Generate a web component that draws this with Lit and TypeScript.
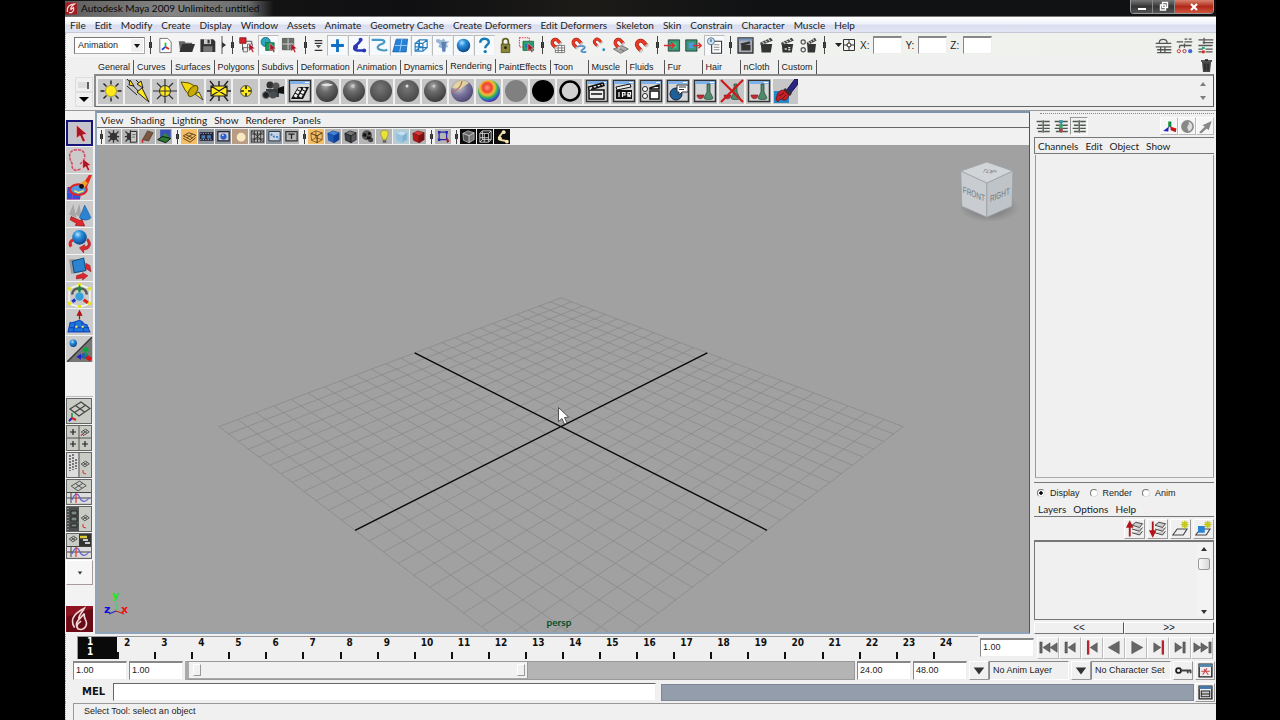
import { LitElement, html, svg, css, nothing } from "lit";
import { customElement, state } from "lit/decorators.js";
import { classMap } from "lit/directives/class-map.js";

type Art = unknown;

const MENUS = ["File", "Edit", "Modify", "Create", "Display", "Window", "Assets", "Animate", "Geometry Cache", "Create Deformers", "Edit Deformers", "Skeleton", "Skin", "Constrain", "Character", "Muscle", "Help"];
const TABS = ["General", "Curves", "Surfaces", "Polygons", "Subdivs", "Deformation", "Animation", "Dynamics", "Rendering", "PaintEffects", "Toon", "Muscle", "Fluids", "Fur", "Hair", "nCloth", "Custom"];

/* ---------- shared drawing parts (24 x 24 box) ---------- */
const cursor = svg`<path d="M14 9l0 11 3-2.500 2 4.500 2-1-2-4.300 3.500-.4z" fill="#b01222" stroke="#fff" stroke-width=".5"/>`;
const sunRays = svg`<path d="M12 1.500v4M12 18.500v4M1.500 12h4M18.500 12h4M4.500 4.500l3 3M16.500 16.500l3 3M19.500 4.500l-3 3M7.500 16.500l-3 3" stroke="#222" stroke-width="1.400"/>`;
const clap = svg`<path d="M4 11h15v9H4z" fill="#eee" stroke="#111" stroke-width="1.500"/><path d="M4 11l-.5-3L18 4l1 2.500L6 10.500" fill="#eee" stroke="#111" stroke-width="1.500"/><path d="M7 7l2 3M11 6l2 3M15 5l2 3M6 15h11" stroke="#111" stroke-width="1.500"/>`;
const darkClap = svg`<path d="M4 10h16l-2 12H5z" fill="#333"/><path d="M3 8L18 1l3 4L4 12z" fill="#444"/><path d="M6 7l3 2.500M10 5l3 2.500M14 3l3 2.500" stroke="#ddd" stroke-width="1.500"/>`;
const win = (inner: Art) => svg`<path d="M1.500 1.500h21v21h-21z" fill="#d4d6d8" stroke="#333" stroke-width="1.500"/><path d="M2 2h20v3H2z" fill="#7fb0e8"/><path d="M17 3.500h4" stroke="#fff"/>${inner}`;
const magnet = svg`<g transform="rotate(-42 9 8)"><path d="M4.500 14V8a4.500 4.500 0 0 1 9 0v6" fill="none" stroke="#931c10" stroke-width="4.600"/><path d="M4.500 13V8a4.500 4.500 0 0 1 9 0v5" fill="none" stroke="#ea3a24" stroke-width="3.400"/><path d="M4.500 12.500v3M13.500 12.500v3" stroke="#c9c9c9" stroke-width="4"/></g>`;
const ball = (fill: string) => svg`<circle cx="12" cy="12" r="11" fill="url(#${fill})"/>`;
const flask = svg`<path d="M14 5h3v8l3 6c0 2-9 2-9 0l3-6z" fill="#4f8a6a" stroke="#243" stroke-width=".7"/><path d="M4 16h7c0 5-7 5-7 0z" fill="#c22b33" stroke="#622" stroke-width=".6"/>`;
const grid3 = svg`<path d="M3 10L14 3l9 6.500L12 17zM8.500 6.500l9 6.500M7.500 13.500l11-7.300" fill="none" stroke="#444" stroke-width="1.200"/>`;
const axis = svg`<path d="M5 19V14" stroke="#0a9a3a" stroke-width="1.500"/><path d="M5 19l-3 3" stroke="#22c" stroke-width="2"/><path d="M5 19l4 2" stroke="#d22" stroke-width="2"/>`;
const transport = (inner: Art) => svg`<g fill="#666" stroke="#333" stroke-width=".5">${inner}</g>`;
const cube = (top: string, left: string, right: string, line: string) => svg`<path d="M3 7l8-4 10 3-8 5z" fill="${top}" stroke="${line}"/><path d="M3 7l10 4v11L4 18z" fill="${left}" stroke="${line}"/><path d="M13 11l8-5v11l-8 5z" fill="${right}" stroke="${line}"/>`;

const STATUS: Record<string, Art> = {
  fresh: svg`<path d="M4 2h11l5 5v15H4z" fill="#fff" stroke="#444"/><path d="M12 14l-5 4" stroke="#24d" stroke-width="2.500"/><path d="M12 14l5 3" stroke="#d22" stroke-width="2.500"/><path d="M12 8v6" stroke="#2b4" stroke-width="2.500"/>`,
  open: svg`<path d="M1 6h8l2 2h9v12H3z" fill="#666"/><path d="M6 10h18l-4 11H2z" fill="#333"/>`,
  save: svg`<path d="M2 3h18l3 3v15H2z" fill="#333"/><path d="M7 3h10v7H7z" fill="#ccc"/><path d="M12 4h3v5h-3z" fill="#333"/><path d="M6 13h13v8H6z" fill="#777"/>`,
  hier: svg`<path d="M1 1h9v8H1z" fill="#d3222a" stroke="#711"/><path d="M5 10v8h7M10 6h8v5" fill="none" stroke="#444" stroke-width="1.300"/><path d="M12 10h7v5h-7zM6 15h6v6H6z" fill="#eee" stroke="#444"/>${cursor}`,
  obj: svg`<circle cx="8" cy="7" r="6.500" fill="#2ba6b8" stroke="#157"/><path d="M8 8h12v11H8z" fill="#1f9a64" stroke="#063"/>${cursor}`,
  comp: svg`<path d="M2 2h16v16H2z" fill="#697067" stroke="#444"/><path d="M10 2v16M2 10h16" stroke="#ccc" stroke-width="1.500"/>${cursor}`,
  list: svg`<path d="M5 3h14M5 8h14M5 21h14" stroke="#333" stroke-width="2"/><path d="M7 11h10l-5 6z" fill="#555"/>`,
  plus: svg`<path d="M12 3v18M3 12h18" stroke="#0d70c4" stroke-width="4"/>`,
  joint: svg`<path d="M15 3c0 6-9 8-9 13 0 4 6 3 14 3" fill="none" stroke="#2a35b8" stroke-width="3.500"/><circle cx="15" cy="4" r="2.800" fill="#2a35b8"/><circle cx="20" cy="19" r="2.800" fill="#2a35b8"/><circle cx="8" cy="14" r="3.500" fill="#2a35b8"/>`,
  curve: svg`<path d="M1 4h12c7 0 8 4 2 6s-8 6-2 8 8 1 10 0" fill="none" stroke="#4698c2" stroke-width="3"/>`,
  surf: svg`<path d="M6 3h16l-2 18H1z" fill="#2682d8" stroke="#135a9c"/><path d="M14 3l-3 18M4 12h17" stroke="#a5d4ff" stroke-width="1.200"/>`,
  lattice: svg`<path d="M3 9h11v11H3zM9 4h11v11H9zM3 9l6-5M14 9l6-5M14 20l6-5M3 20l6-5M3 14h11M8 9v11" fill="none" stroke="#257cbd" stroke-width="1.600"/>`,
  part: svg`<path d="M3 3h5l2 2 4-3 2 4 6 0-4 4 2 4-4 1 0 6-4 1-1-6-5-2 2-4-5-3z" fill="#9ab5d2"/><path d="M10 7h7l-1 13h-4l-1-8z" fill="#5c80b4"/>`,
  sphere: svg`<circle cx="12" cy="12" r="9.500" fill="url(#gBlue)"/>`,
  help: svg`<path d="M6 8c0-8 13-7 12 0-.5 3-5 4-5 8" fill="none" stroke="#1579b4" stroke-width="3.500"/><circle cx="13" cy="20.500" r="2.300" fill="#1579b4"/>`,
  lock: svg`<path d="M8 11V6c0-5 8-5 8 0v5" fill="none" stroke="#666225" stroke-width="2.500"/><path d="M6 10h12v12H6z" fill="#8b8736" stroke="#3c3a12"/><circle cx="12" cy="15" r="2" fill="#222"/>`,
  marquee: svg`<path d="M2 1h14v13H2z" fill="none" stroke="#d33" stroke-width="1.500" stroke-dasharray="2 1.500"/><path d="M7 6h15v13H7z" fill="#2d9d6c" stroke="#0a5a3a"/><path d="M10 10h8v5h-8z" fill="#2276c7"/>${cursor}`,
  mGrid: svg`<path d="M9 12h13v10H9zM9 15.500h13M9 19h13M13 12v10M18 12v10" fill="#fff" stroke="#555"/>${magnet}`,
  mCurve: svg`<path d="M10 14c8-3 14 0 9 3s-4 5 4 4" fill="none" stroke="#4f8ec8" stroke-width="2.500"/>${magnet}`,
  mPoint: svg`<g transform="translate(1 0) scale(.85)">${magnet}</g><circle cx="18" cy="18" r="2" fill="#2993c5"/>`,
  mPlane: svg`<path d="M2 17l12-5 9 5-11 6zM8 15l9 5" fill="#aaa" stroke="#555"/>${magnet}`,
  mLive: svg`<g transform="translate(0 1) scale(1.200)">${magnet}</g>`,
  inp: svg`<path d="M6 4h16v16H6z" fill="#3c9470" stroke="#123"/><path d="M10 8h8v8h-8z" fill="#2bc58b"/><path d="M0 12h13M10 8l5 4-5 4" stroke="#e02b2b" stroke-width="2" fill="none"/>`,
  outp: svg`<path d="M1 4h16v16H1z" fill="#3c9470" stroke="#123"/><path d="M5 8h8v8H5z" fill="#4c9be0"/><path d="M11 12h12M19 8l4 4-4 4" stroke="#e02b2b" stroke-width="2" fill="none"/>`,
  hist: svg`<path d="M8 6h14v17H8z" fill="#fff" stroke="#333" stroke-width="1.500"/><path d="M11 11h8M11 14.500h8M11 18h8" stroke="#555"/><circle cx="7" cy="6" r="5" fill="#cfe4f3" stroke="#357"/><path d="M7 3v4" stroke="#246" stroke-width="1.500"/>`,
  rView: svg`<path d="M1.500 1.500h21v21h-21z" fill="#a8adb7" stroke="#333" stroke-width="2"/><path d="M2 2h20v3H2z" fill="#778fb5"/><path d="M6 11h13v8H6zM5 9l13-3 1 3-13 3z" fill="#333"/>`,
  render: darkClap,
  ipr: svg`${darkClap}<path d="M8 17h3M13 15h3M13 18h3" stroke="#ddd" stroke-width="2"/>`,
  rSet: svg`<g transform="translate(7 0) scale(.78 1)">${darkClap}</g><circle cx="4.500" cy="7" r="3" fill="#eee" stroke="#555" stroke-width="1.700"/><circle cx="4.500" cy="18" r="3" fill="#eee" stroke="#555" stroke-width="1.700"/>`,
};

const SHELF: Art[] = [
  svg`<circle cx="12" cy="12" r="5.500" fill="#ffe81c" stroke="#8a7a00" stroke-width=".6"/>${sunRays}`,
  svg`<path d="M1 0l12 13M10 1l6 6M1 7l10 9" stroke="#222"/><path d="M11 13l5-4 7 14zM3 6l1-5 4 6zM11 5l4-3 2 7z" fill="#ffe81c" stroke="#222"/>`,
  svg`<path d="M12 0v24M0 12h24M4 4l16 16M20 4L4 20" stroke="#333" stroke-width="1.200"/><circle cx="12" cy="12" r="5.500" fill="#ffe81c" stroke="#333"/><path d="M12 6v12M6 12h12" stroke="#333"/>`,
  svg`<path d="M1 3l8 1 8 4-7 9-5-6z" fill="#f2d80c" stroke="#5a4f00"/><ellipse cx="13" cy="12" rx="3.500" ry="6.500" transform="rotate(40 13 12)" fill="#c7ab00" stroke="#5a4f00"/><path d="M15 15l4-2 4 8z" fill="#ffe81c" stroke="#444"/>`,
  svg`<path d="M3 2l4 5M21 2l-4 5M12 2v5M12 17v5M3 22l4-5M21 22l-4-5M0 12h4M20 12h4" stroke="#222" stroke-width="1.400"/><path d="M4 7h16v10H4zM4 7l16 10M20 7L4 17" fill="#ffe81c" stroke="#222" stroke-width="1.200"/>`,
  svg`<circle cx="12" cy="12" r="5.500" fill="#ffe81c" stroke="#555"/><path d="M12 7v3M12 14v3M7 12h3M14 12h3" stroke="#222" stroke-width="1.600"/>`,
  svg`<circle cx="9" cy="6" r="3.500" fill="#333"/><circle cx="15" cy="7" r="3.500" fill="#555"/><path d="M5 10h13v8H5z" fill="#3a4044"/><path d="M17 9l6-2v8l-6-1z" fill="#111"/><circle cx="5" cy="16" r="3.500" fill="#222" stroke="#777"/><circle cx="12" cy="16" r="3.500" fill="#484f54"/>`,
  win(svg`<path d="M3 20L10 8h11l-6 12z" fill="#111"/><path d="M7 18l5-9M12 18l5-9" stroke="#eee" stroke-width="3" stroke-dasharray="3 1"/>`),
  svg`${ball("gGrey")}<path d="M6 6c3-2 9-2 12 0-3 1.500-9 1.500-12 0z" fill="#e4e4e4"/>`,
  svg`${ball("gGrey")}<circle cx="11" cy="7" r="2" fill="#ddd" opacity=".6"/>`,
  ball("gMatte"), svg`${ball("gMatte")}<circle cx="11" cy="7" r="1.500" fill="#ddd"/>`,
  svg`${ball("gGrey")}<circle cx="11" cy="7" r="1.500" fill="#ddd" opacity=".7"/>`,
  svg`${ball("gLayer")}<path d="M2 9C5 1 14-1 19 4l-9 6z" fill="#e7dd9c" opacity=".85"/><path d="M2 13c3-1 9-4 10-11" stroke="#c06a5c" stroke-width="1.300" fill="none"/>`,
  ball("gRamp"),
  svg`<circle cx="12" cy="12" r="11" fill="#808080"/>`, svg`<circle cx="12" cy="12" r="11" fill="#000"/>`,
  svg`<circle cx="12" cy="12" r="9.500" fill="#d2d2d2" stroke="#000" stroke-width="2.500"/>`,
  win(clap),
  win(svg`<path d="M4 11h16v9H4z" fill="#111"/><path d="M4 8l14-3 1 3L5 11z" fill="#eee" stroke="#111"/><path d="M7 13v5M10.500 18v-4.500h2.500v2.500h-2.500M16 18v-4.500h2.500v2.500L16 16l2.500 2" stroke="#fff" fill="none" stroke-width="1.200"/>`),
  win(svg`<circle cx="6" cy="10" r="2.500" fill="#fff" stroke="#222"/><circle cx="6" cy="17" r="2.500" fill="#fff" stroke="#222"/><path d="M11 9l9-3v4H11zM11 12h9v8h-9z" fill="#fff" stroke="#111" stroke-width="1.500"/>`),
  win(svg`<circle cx="10" cy="15" r="6" fill="#1d5f96" stroke="#124"/><path d="M11 6h11v7h-6l-3 3v-3h-2z" fill="#fff" stroke="#333"/><path d="M13 8h7M13 10.500h5" stroke="#333"/>`),
  win(flask),
  svg`${flask}<path d="M1 1l22 22M23 1L1 23" stroke="#d01818" stroke-width="2.200"/>`,
  win(flask),
  svg`<path d="M0 12h15v12H0z" fill="#2488c6"/><path d="M12 12l9-12h3v5l-8 10z" fill="#2b2780" stroke="#115"/><path d="M11 9l7 5-2 3-7-5z" fill="#333"/><path d="M2 21c1-7 3-10 8-10l5 5c-1 4-3 6-6 5l-3-1-2 3z" fill="#c32028" stroke="#501" stroke-width=".6"/><path d="M5 17l5-3M8 20l4-4" stroke="#611"/>`,
];

const TOOLS: [string, Art][] = [
  ["Select", svg`<path d="M8 3v15l4-3 3 7 3-1.500-3-6.500 5-.5z" fill="#a91624" stroke="#ecc" stroke-width=".8"/>`],
  ["Lasso", svg`<path d="M13 20c-5 3-9 1-8-5C1 9 2 3 7 2s10 0 10 6-4 6-5 8" fill="none" stroke="#d64a66" stroke-width="1.500" stroke-dasharray="3 1"/><path d="M15 10v10l3-2 2 4 2-1-2-4 3-.5z" fill="#a91624" stroke="#fcc" stroke-width=".6"/>`],
  ["Paint Select", svg`<path d="M1 12h13l-2 11H0z" fill="#2f55d8" stroke="#8a25a8"/><path d="M6 12l-1 11M0 17h13" stroke="#8a4ad0"/><ellipse cx="11" cy="14" rx="8" ry="5" fill="#4c9be0" stroke="#e02424" stroke-width="2"/><path d="M15 9l6-9h3l-5 12z" fill="#e32a1c"/><path d="M13 8l4-3 3 3-4 5z" fill="#f2a22a"/><circle cx="14" cy="11" r="2.300" fill="#111"/><path d="M7 15l4 2 5-2" fill="none" stroke="#ee6" stroke-width="1.500"/>`],
  ["Move", svg`<path d="M6 2L2 12l7 3zM12 2L8 12l6 3z" fill="#a6a6a6"/><path d="M17 3l-5 12c2 3 9 3 11 0z" fill="#2b83d2" stroke="#155a9a" stroke-width=".6"/><path d="M4 14l9 4 1-2 3 7-9-.5 1-2-6-3.500z" fill="#e0262e" stroke="#8d1016" stroke-width=".6"/>`],
  ["Rotate", svg`<path d="M4 17C2 14 3 11 7 10" fill="none" stroke="#e0262e" stroke-width="3"/><circle cx="12" cy="8" r="7" fill="url(#gBlue)"/><path d="M20 9c5 5 2 11-4 11l0 3-4-5 5-3 0 2c4 0 4-3 2-6z" fill="#e0262e" stroke="#8d1016" stroke-width=".5"/>`],
  ["Scale", svg`<path d="M2 3h10v13l-8 1z" fill="#999"/><path d="M5 5l11-3 2 12-11 2z" fill="#2b83d2" stroke="#14507f"/><path d="M18 7l4 2 1 6-5-3zM9 19l6-2 0-1 5 3-5 4 0-2-6 1z" fill="#e0262e" stroke="#8d1016" stroke-width=".5"/>`],
  ["Universal", svg`<path d="M12 2l10 3v15l-10 3L2 20V5z" fill="none" stroke="#f4f4f4" stroke-width="1.500"/><path d="M1 4h3v3H1zM20 4h3v3h-3zM10.500 0h3v3h-3zM1 18h3v3H1zM20 18h3v3h-3zM10.500 21h3v3h-3z" fill="#e2e22c"/><path d="M5 11c0-8 14-8 14 0" fill="none" stroke="#555" stroke-width="2.500"/><circle cx="12" cy="13" r="4" fill="#37a0dc"/><path d="M12 9V5M10.500 7l1.500-3 1.500 3" stroke="#198a3a" stroke-width="2"/><path d="M8 16l-3 2" stroke="#23c" stroke-width="3"/><path d="M16 16l4 3" stroke="#d22" stroke-width="3"/>`],
  ["Soft Modify", svg`<path d="M3 12c4 1 6-2 9-2s4 5 7 4l3 7H1z" fill="#1f78d8" stroke="#1247c0"/><path d="M8 12l-2 9M14 11l2 10M2 17h19" stroke="#1247c0" stroke-width="1.200"/><path d="M8 16h2M14 16h2" stroke="#ee6" stroke-width="2"/><path d="M12 9V4M10 5L12 1l2 4z" fill="#b22" stroke="#a11" stroke-width="1.200"/>`],
  ["Last Tool", svg`<path d="M24 0v24H0z" fill="#777"/><path d="M24 0L0 24" stroke="#333" stroke-width="1.200"/><circle cx="6" cy="6" r="3.500" fill="url(#gBlue)"/><circle cx="17" cy="18" r="3" fill="#269"/><path d="M18 18v-6M16 13l2-3 2 3z" fill="#1c4" stroke="#0a3" stroke-width="1.500"/><path d="M15 19H11M13 17l-3 2 3 2z" fill="#22c" stroke="#22c"/><path d="M19 19l4 3" stroke="#d11" stroke-width="4"/>`],
];

const plusCell = (x: number, y: number) => svg`<path d="M${x} ${y - 3}v6M${x - 3} ${y}h6" stroke="#222" stroke-width="1.200"/>`;
const wave = svg`<path d="M0 13h24v10H0z" fill="#ddd"/><path d="M0 18h24M4 13v10" stroke="#444"/><path d="M5 20c3-8 6-7 8-2s6 4 9 0" fill="none" stroke="#66c" stroke-width="1.200"/><path d="M9 13v10" stroke="#e33" stroke-width="1.200"/>`;
const mini = (x: number, y: number) => svg`<g transform="translate(${x} ${y}) scale(.4)"><path d="M3 10L14 3l9 6.500L12 17zM8.500 6.500l9 6.500M7.500 13.500l11-7.300" fill="none" stroke="#444" stroke-width="2.200"/></g>`;
const LAYOUTS: [string, Art][] = [
  ["Single perspective", svg`${grid3}${axis}`],
  ["Four views", svg`<path d="M12 0v24M0 12h24" stroke="#555"/>${plusCell(6, 6)}${plusCell(6, 18)}${plusCell(18, 18)}${mini(13, 2)}<path d="M15 8l-1 2M15 8l2 2" stroke="#c33"/>`],
  ["Outliner and perspective", svg`<path d="M0 0h11v24H0z" fill="#ddd"/><path d="M3 2v16M6 1v16M9 6v10" stroke="#555" stroke-width="1.500" stroke-dasharray="2 1"/><path d="M12 0v24" stroke="#555"/>${mini(13, 7)}<path d="M16 17v3M16 20l3 1" stroke="#c33"/>`],
  ["Perspective and graph", svg`<g transform="translate(2 -1) scale(.75 .7)">${grid3}</g><path d="M0 12.500h24" stroke="#444"/>${wave}`],
  ["Hypershade and perspective", svg`<path d="M0 0h12v24H0z" fill="#4c4f4f"/><path d="M1 1v22" stroke="#ccc" stroke-dasharray="1 2"/><path d="M4 4h6v4H4zM4 10h6v4H4zM4 17h6v3H4z" fill="#7a8a80" stroke="#222"/>${mini(13, 7)}<path d="M16 17v3M16 20l3 1" stroke="#c33"/>`],
  ["Perspective, hypergraph and graph", svg`<path d="M12 0h12v12H12z" fill="#333"/><path d="M13 3h7" stroke="#dc3" stroke-width="2.500"/><path d="M16 6h5M18 9h5" stroke="#ccc" stroke-width="2"/>${mini(1, 1)}<path d="M0 12.500h24" stroke="#444"/>${wave}`],
];

const camera = svg`<path d="M4 4l16 16M20 4L4 20M12 2v20M3 12h18" stroke="#333" stroke-width="2"/><circle cx="12" cy="12" r="6" fill="#333"/>`;
const P: Record<string, [string, Art]> = {
  cam: ["", camera],
  camAttr: ["", svg`${camera}<path d="M13 4h9v17h-9" fill="#ccc" stroke="#222" stroke-width="1.500"/><path d="M15 9h5M15 13h4" stroke="#222"/>`],
  book: ["", svg`<path d="M4 17L12 3l9 3-7 13z" fill="#7a5540" stroke="#432"/><path d="M4 17v5" stroke="#c22" stroke-width="2.500" fill="none"/>`],
  image: ["", svg`<path d="M5 1h17v13H5z" fill="#3b51b8"/><path d="M6 14l7-8 8 8z" fill="#2f8a33"/><path d="M1 17l8-5 13 3-8 7z" fill="#2a7a35" stroke="#111" stroke-width="1.500"/>`],
  grid: ["orange", svg`<path d="M2 11l9-5 11 4-9 7zM2 15l11 6 9-7M6 9l11 5M8 14l9-6" fill="none" stroke="#5a3e10" stroke-width="1.500"/>`],
  film: ["steel", svg`<path d="M1 5h22v14H1z" fill="#223"/><path d="M2 7h20M2 17h20" stroke="#aac" stroke-width="1.500" stroke-dasharray="2 2"/><path d="M4 10h6v5H4zM13 10h6v5h-6z" fill="#4b7cb8"/>`],
  gate: ["steel", svg`<path d="M3 4h18v15H3z" fill="#c8ccd6" stroke="#223" stroke-width="2"/><circle cx="12" cy="12" r="5" fill="#2a5fd0"/><circle cx="11" cy="10" r="1.500" fill="#cde"/>`],
  mask: ["tan", svg`<circle cx="13" cy="13" r="7" fill="#f8e8c4"/>`],
  chart: ["", svg`<path d="M2 3h20v18H2zM2 3l20 18M22 3L2 21M7 3v18M12 3v18M17 3v18M2 8h20M2 16h20" fill="none" stroke="#222" stroke-width="1.200"/>`],
  safe: ["steel", svg`<path d="M3 4h18v15H3z" fill="#c8d4e4" stroke="#234" stroke-width="1.500"/><path d="M6 8l5 4 6 1 2 3" fill="none" stroke="#357ac0" stroke-width="3" stroke-dasharray="3 2"/>`],
  title: ["", svg`<path d="M3 4h18v15H3z" fill="none" stroke="#333" stroke-width="2"/><path d="M7 8h10M12 8v8" stroke="#222" stroke-width="2"/>`],
  wire: ["orange", svg`${cube("none", "none", "none", "#4a3208")}<path d="M11 3v11l10 3M11 14l-7 4" stroke="#4a3208" fill="none"/>`],
  shade: ["", cube("#3d86d8", "#1a5ab8", "#0f3f94", "#0f3f94")],
  dark: ["", cube("#777", "#3c3f42", "#55585c", "#111")],
  tex: ["", svg`<circle cx="11" cy="10" r="8" fill="#555"/><circle cx="17" cy="17" r="4" fill="#444"/><path d="M5 7h5v5H5zM13 5h4v4h-4zM11 12h6v4h-6z" fill="#111"/>`],
  bulb: ["", svg`<path d="M12 2c8 0 7 8 3 12v3H9v-3C5 10 4 2 12 2z" fill="#e8e235" stroke="#8a8820"/><path d="M9 18h6v4H9z" fill="#666"/>`],
  ghost: ["pale", cube("#c4e2f0", "#94c2dc", "#7db2d2", "#9cc6dd")],
  red: ["", cube("#d83a3a", "#b01818", "#7c0f0f", "#701010")],
  iso: ["", svg`<path d="M5 5h12v12H5z" fill="none" stroke="#2428b0" stroke-width="2"/><path d="M3 3h4v4H3zM15 3h4v4h-4zM3 15h4v4H3z" fill="#2428b0"/><path d="M17 14l1 8 3-3z" fill="#a12" stroke="#a12"/>`],
  xray: ["black", cube("#666", "#555", "#777", "#ddd")],
  xrayJ: ["black", svg`<path d="M3 7h14v14H3zM7 3h14v14H7zM3 7l4-4M17 7l4-4M17 21l4-4M3 21l4-4M10 7v14M3 14h14" fill="none" stroke="#ddd" stroke-width="1.400"/>`],
  bone: ["black", svg`<path d="M13 3c-1 6-8 8-7 13 1 3 8 1 13 4" fill="none" stroke="#f2dc9c" stroke-width="3"/><circle cx="14" cy="5" r="3" fill="#f6e6b8"/><circle cx="8" cy="15" r="3" fill="#f6e6b8"/><circle cx="19" cy="20" r="3" fill="#f6e6b8"/>`],
};
const PANEL_GROUPS = [["cam", "camAttr", "book", "image"], ["grid", "film", "gate", "mask", "chart", "safe", "title"], ["wire", "shade", "dark", "tex", "bulb", "ghost", "red"], ["iso"], ["xray", "xrayJ", "bone"]];

const tri = (x: number, dir: number) => svg`<path d="M${x} 6v12l${dir * 9}-6z"/>`;
const PLAYBACK: [string, Art][] = [
  ["Go to start", transport(svg`<path d="M1 5h3v14H1z"/>${tri(14, -1)}${tri(23, -1)}`)],
  ["Step back frame", transport(svg`<path d="M5 5h3v14H5z"/>${tri(18, -1)}`)],
  ["Step back key", svg`${transport(tri(18, -1))}<path d="M5 3h3v18H5z" fill="#b8242c"/>`],
  ["Play backwards", transport(svg`<path d="M18 4v16L4 12z"/>`)],
  ["Play forwards", transport(svg`<path d="M6 4v16l14-8z"/>`)],
  ["Step forward key", svg`${transport(tri(6, 1))}<path d="M16 3h3v18h-3z" fill="#b8242c"/>`],
  ["Step forward frame", transport(svg`${tri(5, 1)}<path d="M15 5h3v14h-3z"/>`)],
  ["Go to end", transport(svg`${tri(1, 1)}${tri(10, 1)}<path d="M20 5h3v14h-3z"/>`)],
];

const channelIcon = (dots: boolean) => svg`<path d="M1 4h9M3 10h7M1 15h9M3 20h7M13 4h9M13 10h9M13 15h9M13 20h9M11.500 2v20" stroke="#4f584f" stroke-width="2.200"/>${dots ? svg`<path d="M8 2h6v5H8z" fill="#39a"/><path d="M8 9h6v5H8z" fill="#3a6"/><path d="M8 16h6v5H8z" fill="#a44"/>` : nothing}`;
const layerStack = (x: number) => svg`<path d="M${x} 7l5-4 9 2-4 5zM${x} 12l10 3 4-5M${x} 17l10 3 4-5" fill="#ccc" stroke="#444" stroke-width="1.300"/>`;
const sparkle = svg`<path d="M17 1v10M12 6h10M13.500 2.500l7 7M20.500 2.500l-7 7" stroke="#c6c81e" stroke-width="2"/>`;
const sheet = svg`<path d="M1 20l6-8h13l-5 8z" fill="#eee" stroke="#444" stroke-width="1.500"/>`;

/* Perspective projection of the ground plane; u and v run from -1 to 1. */
const CX = 561, CY = 427;
const project = (u: number, v: number) => {
  const s = u + v, w = 1 - 0.1693 * s;
  return [CX + (170.7 * (u - v)) / w, CY + (86 * s) / w];
};
const segment = (u1: number, v1: number, u2: number, v2: number) => {
  const [a, b] = project(u1, v1), [c, d] = project(u2, v2);
  return `M${a.toFixed(1)} ${b.toFixed(1)}L${c.toFixed(1)} ${d.toFixed(1)}`;
};
const GRID = Array.from({ length: 25 }, (_, i) => (i - 12) / 12)
  .map((t) => segment(t, -1, t, 1) + segment(-1, t, 1, t)).join("");
const AXES = segment(0, -1, 0, 1) + segment(-1, 0, 1, 0);

@customElement("app-root")
export class AppRoot extends LitElement {
  @state() private tab = "Rendering";
  @state() private tool = "Select";

  static styles = css`
    :host { display: block; height: 100vh; min-height: 600px; background: #000; padding: 0 64px 0 65px; box-sizing: border-box; overflow: hidden;
      --ui: Lato, "Open Sans", sans-serif; --ms: "Liberation Sans", Arial, sans-serif;
      color: #1c1c1c; font: 10px/14px var(--ui); }
    * { box-sizing: border-box; }
    button, input, select { font: inherit; color: inherit; margin: 0; padding: 0; border: 0; border-radius: 0; background: none; min-width: 0; }
    button { display: flex; align-items: center; justify-content: center; flex: none; }
    svg { display: block; flex: none; }
    .defs { position: absolute; width: 0; height: 0; }
    .app { display: flex; flex-direction: column; height: 100%; background: #f0f0f0; }
    .row { display: flex; align-items: center; flex: none; }
    .grow { flex: 1; min-width: 0; }

    .title { height: 17px; background: linear-gradient(90deg, #171717, #101012 30%, #1c1b18 45%, #111214 60%, #101113); border-bottom: 1px solid #777; gap: 4px; }
    .title h1 { margin: 0 0 0 -16px; font: 10px/15px var(--ui); color: #080808; background: linear-gradient(90deg, #5d5d5d, #858585 50%, #6c6c6c 88%, #151515); padding: 0 14px 0 16px; }
    .title .logo { z-index: 1; }
    .winctl { display: flex; align-self: flex-start; height: 14px; margin-right: 2px; border: 1px solid #999; border-top: 0; border-radius: 0 0 4px 4px; overflow: hidden; }
    .winctl button { width: 22px; height: 13px; background: linear-gradient(#777, #353535 50%, #555); border-right: 1px solid #888; }
    .winctl .close { width: 38px; background: linear-gradient(#d8836f, #b0281a 50%, #d2553c); border: 0; }

    .menubar { height: 16px; background: linear-gradient(#fff, #eef3fa 45%, #d9ddee 55%, #e2e5f3); border-bottom: 1px solid #c6cad6; }
    .menus { display: flex; align-items: center; gap: 7px; padding-left: 4px; }
    .menubar .menus { gap: 9px; padding-left: 5px; }
    .menus a { color: inherit; text-decoration: none; white-space: nowrap; }

    .status { height: 24px; padding-left: 8px; background: linear-gradient(90deg, #f4f4f4, #eef1ec); }
    .dots { border-left: 1px dotted #aaa; }
    .picker { position: relative; display: flex; width: 71px; height: 17px; font: 9px/13px var(--ms); }
    .picker select { appearance: none; flex: 1; background: #fff; border: 1px solid #777; border-right-color: #aaa; border-bottom-color: #aaa; padding-left: 3px; }
    .picker svg { position: absolute; right: 2px; top: 2px; pointer-events: none; background: #f0f0f0; }
    .icon { width: 21px; height: 21px; }
    .icon.on { background: #f6fafc; border: 1px solid #bbb; border-right-color: #eee; border-bottom-color: #eee; }
    .icon.thin { width: 17px; }
    .sep { width: 10px; height: 18px; flex: none; background: linear-gradient(#444, #444) center / 1px 100% no-repeat, linear-gradient(#333, #333) center / 3px 6px no-repeat; }
    .coord { display: flex; align-items: center; gap: 4px; font: 10px/13px var(--ms); margin-right: 3px; }
    .mode { margin: 0 5px 0 6px; }
    .field { background: #fff; border: 1px solid #888; border-right-color: #eee; border-bottom-color: #eee; }
    .coord input { width: 29px; height: 18px; border-top-width: 2px; }

    .tabs { height: 17px; padding-left: 29px; font: 9px/14px var(--ms); }
    .tabs button { height: 14px; padding: 0 3px; border-right: 1px solid #555; min-width: 38px; justify-content: flex-start; align-self: flex-end; }
    .tabs button.active { align-self: center; }
    .shelfrow { display: flex; flex: none; height: 34px; padding: 0 2px 0 8px; }
    .shelfnav { width: 20px; display: flex; flex-direction: column; align-items: center; padding: 3px 0 0; }
    .shelfnav button { width: 18px; height: 15px; border: 1px solid #ddd; }
    .shelf { flex: 1; display: flex; align-items: center; gap: 2px; padding: 0 2px; border: 2px solid #8a8a8a; border-bottom: 1px solid #666; border-right: 1px solid #555; height: 33px; }
    .shelf button { width: 25px; height: 25px; background: #c6c6c6; }
    .updown { display: flex; flex-direction: column; justify-content: space-between; height: 22px; margin-right: 4px; opacity: .6; }
    .bottomline { height: 3px; flex: none; border-bottom: 1px solid #999; }

    .main { flex: 1; min-height: 0; display: flex; }
    .toolbox { width: 30px; display: flex; flex-direction: column; align-items: flex-start; gap: 1px; padding: 9px 1px 0; background: #f2f2f2; flex: none; }
    .toolbox button { width: 27px; height: 26px; background: #cbcbcb; }
    .toolbox .picked { border: 2px solid #15157c; background: #c4c4cc; }
    .toolbox .layout { border: 1px solid #666; background: #c9cbc5; width: 26px; }
    .toolbox .more { height: 25px; background: #f6f6f6; border: 1px solid #fff; border-right-color: #a99; border-bottom-color: #a99; }
    .toolbox .space { flex: 1; max-height: 34px; border-bottom: 1px solid #bbb; width: 27px; }
    .toolbox .brand { background: #8d1420; margin-top: auto; margin-bottom: 2px; }
    .panel { flex: 1; min-width: 0; display: flex; flex-direction: column; border: 2px solid #8fa4b8; border-top-color: #7d95ab; border-right: 1px solid #555; }
    .panelmenu { height: 15px; flex: none; border-bottom: 1px solid #666; }
    .panelbar { height: 17px; background: #f1f1f1; }
    .panelbar button { width: 16px; height: 15px; margin-right: 1px; background: #b4b4b4; }
    .panelbar .orange { background: #f3be6a; } .panelbar .steel { background: #8f969e; } .panelbar .tan { background: #b89c84; }
    .panelbar .black { background: #0c0c0c; } .panelbar .pale { background: #b8ccd4; }
    .panelbar .sep { width: 8px; height: 14px; background-size: 1px 100%, 3px 5px; }
    .view { position: relative; flex: 1; min-height: 0; background: #a1a1a1; }
    .view .scene { position: absolute; inset: 0; width: 100%; height: 100%; }
    .view .cam { position: absolute; left: 0; right: 8px; bottom: 3px; text-align: center; color: #04502c; font: bold 10px/14px var(--ui); }

    .side { width: 186px; flex: none; padding: 2px 2px 0 4px; display: flex; flex-direction: column; }
    .griph { height: 3px; border-top: 1px dotted #888; flex: none; margin-left: 6px; }
    .sidebar { height: 20px; margin-bottom: 1px; }
    .sidebar button { width: 18px; height: 18px; }
    .sidebar .raised { border: 1px solid #fff; border-right-color: #bbb; border-bottom-color: #bbb; background: #f6f6f6; }
    .sidebar .sunk { border: 1px solid #999; border-right-color: #fff; border-bottom-color: #fff; }
    .sidemenu { height: 17px; border: 1px solid #777; border-right: 0; }
    .sidemenu .menus { padding-left: 3px; }
    .channels { flex: 1; border: 1px solid #999; border-top: 0; border-bottom: 1px solid #aaa; margin-top: 1px; margin-left: 1px; }
    .radios { display: flex; gap: 10px; height: 20px; align-items: center; font: 9px/14px var(--ms); border-top: 1px solid #777; margin-top: 4px; padding: 1px 0 0 3px; }
    .radios label { display: flex; align-items: center; gap: 5px; }
    .radios input { appearance: none; width: 8px; height: 8px; border-radius: 50%; background: #fff; border: 1px solid #777; border-right-color: #ddd; border-bottom-color: #ddd; }
    .radios input:checked { background: radial-gradient(circle, #000 35%, #fff 45%); }
    .layermenu { height: 15px; border-bottom: 1px solid #777; }
    .layerbar { height: 23px; justify-content: flex-end; gap: 2px; }
    .layerbar button { width: 21px; height: 20px; border: 1px solid #fff; border-right-color: #999; border-bottom-color: #999; }
    .layers { height: 80px; flex: none; border: 1px solid #777; border-top-width: 2px; display: flex; justify-content: flex-end; padding: 3px 2px; }
    .scroll { display: flex; flex-direction: column; align-items: center; width: 14px; background: #f3f3f3; }
    .thumb { width: 12px; height: 12px; margin-top: 5px; border: 1px solid #999; border-radius: 2px; background: linear-gradient(90deg, #fafafa, #d8d8d8); }
    .scroll .down { margin-top: auto; }
    .pager { display: flex; height: 12px; margin-top: 2px; flex: none; font: 10px/10px var(--ms); }
    .pager button { flex: 1; border: 1px solid #fff; border-right-color: #555; border-bottom-color: #777; }

    .time { height: 25px; padding: 2px 3px 0 11px; }
    .ticks { flex: 1; min-width: 0; display: flex; height: 23px; border: 1px solid #999; border-width: 1px 0 0 1px; margin-right: 2px; padding: 0 8px 0 0; font: bold 10px/14px "DejaVu Sans Condensed", "DejaVu Sans", sans-serif; color: #111; }
    .tick { flex: 1 1 0; padding-left: 7px; min-width: 0; background: linear-gradient(#111, #111) left bottom / 2px 7px no-repeat; line-height: 12px; }
    .tick.now { background: #0a0a0a; color: #fff; padding-left: 9px; line-height: 10px; }
    .tick.now span { display: block; }
    .num { font: 9px/13px var(--ms); height: 19px; width: 54px; padding: 0 0 2px 2px; border-top: 2px solid #888; }
    .play { display: flex; margin-left: 3px; }
    .play button { width: 22px; height: 22px; border: 1px solid #fff; border-right-color: #bbb; border-bottom-color: #bbb; }
    .range { height: 22px; padding: 1px 1px 0 7px; gap: 2px; }
    .trough { flex: 1; min-width: 0; height: 19px; background: #b4b4b4; border: 1px solid #999; border-left: 4px solid #aaa; display: flex; }
    .bar { width: 51%; display: flex; justify-content: space-between; align-items: center; padding: 0 2px 0 4px; border-right: 1px solid #999; border-bottom: 1px solid #aaa; background: #f1f1f1; }
    .bar button { width: 8px; height: 12px; border: 1px solid #fff; border-right-color: #999; border-bottom-color: #999; }
    .drop { width: 20px; height: 19px; border: 1px solid #fff; border-right-color: #999; border-bottom-color: #999; }
    .set { width: 80px; height: 19px; border: 1px solid #888; border-right-color: #fff; border-bottom-color: #fff; font: 9px/16px var(--ms); padding-left: 3px; white-space: nowrap; margin-left: -2px; }
    .cmd { height: 21px; padding: 1px 1px 0 16px; }
    .cmd label { font: bold 10px/14px "DejaVu Sans", sans-serif; width: 31px; color: #111; }
    .cmd input { flex: 50 1 0; height: 18px; border-top-color: #666; border-left-color: #666; }
    .cmd output { flex: 49 1 0; height: 17px; margin: 0 1px 0 5px; background: #949dab; border: 1px solid #808896; }
    .helpline { height: 18px; padding: 0 0 0 7px; }
    .helpline p { margin: 0; flex: 1; border: 1px solid #999; border-width: 1px 0 0 1px; height: 17px; font: 9px/15px var(--ms); padding-left: 10px; }
  `;

  private i(art: Art, size = 17) {
    return html`<svg width=${size} height=${size} viewBox="0 0 24 24" aria-hidden="true">${art}</svg>`;
  }
  private menu(items: string[]) {
    return html`<nav class="menus">${items.map((m) => html`<a href="#">${m}</a>`)}</nav>`;
  }
  private st(keys: string[], on: string[] = []) {
    return keys.map((k) => html`<button class=${classMap({ icon: true, on: on.includes(k) })} aria-label=${k}>${this.i(STATUS[k])}</button>`);
  }
  private arrow(up = false, s = 8) {
    return html`<svg width=${s} height=${s} viewBox="0 0 8 8"><path d=${up ? "M1 6l3-4 3 4z" : "M1 2l3 4 3-4z"} fill="#333" /></svg>`;
  }

  render() {
    return html`
      <svg class="defs"><defs>
        <radialGradient id="gGrey" cx=".42" cy=".28" r=".75"><stop offset="0" stop-color="#aaa"/><stop offset=".35" stop-color="#6c6c6c"/><stop offset="1" stop-color="#383838"/></radialGradient>
        <radialGradient id="gMatte" cx=".45" cy=".35" r=".7"><stop offset="0" stop-color="#777"/><stop offset="1" stop-color="#444"/></radialGradient>
        <radialGradient id="gBlue" cx=".38" cy=".3" r=".75"><stop offset="0" stop-color="#b5e4ff"/><stop offset=".35" stop-color="#2a90dd"/><stop offset="1" stop-color="#0b3f86"/></radialGradient>
        <radialGradient id="gLayer" cx=".35" cy=".3" r=".8"><stop offset="0" stop-color="#d8d4d0"/><stop offset=".5" stop-color="#77739c"/><stop offset="1" stop-color="#454068"/></radialGradient>
        <radialGradient id="gRamp" cx=".42" cy=".35" r=".65"><stop offset="0" stop-color="#ff9a80"/><stop offset=".3" stop-color="#f04030"/><stop offset=".52" stop-color="#f2c23c"/><stop offset=".7" stop-color="#35b455"/><stop offset=".88" stop-color="#2a62cc"/><stop offset="1" stop-color="#5a2a9c"/></radialGradient>
      </defs></svg>
      <div class="app">
        <header class="row title">
          <svg class="logo" width="12" height="13" viewBox="0 0 24 24"><path d="M0 0h24v24H0z" fill="#a31c22"/><path d="M5 19C3 9 9 3 19 3c-6 4-8 8-7 11l5-4c2 7-3 12-9 10" fill="none" stroke="#f6dede" stroke-width="2.500"/></svg>
          <h1>Autodesk Maya 2009 Unlimited: untitled</h1>
          <span class="grow"></span>
          <div class="winctl">
            <button aria-label="Minimize"><svg width="12" height="12" viewBox="0 0 12 12"><path d="M2 7h8v2H2z" fill="#fff"/></svg></button>
            <button aria-label="Restore"><svg width="12" height="12" viewBox="0 0 12 12"><path d="M4.500 1.500h5v5h-5zM2.500 4h5v5h-5z" fill="#555" stroke="#fff" stroke-width="1.400"/></svg></button>
            <button class="close" aria-label="Close"><svg width="12" height="12" viewBox="0 0 12 12"><path d="M3 3l6 6M9 3l-6 6" stroke="#fff" stroke-width="2.200"/></svg></button>
          </div>
        </header>
        <div class="row menubar">${this.menu(MENUS)}</div>

        <div class="row status dots">
          <div class="picker"><select aria-label="Menu set"><option>Animation</option></select><svg width="12" height="13" viewBox="0 0 12 13"><path d="M3 5h6l-3 4z" fill="#111"/></svg></div>
          <i class="sep"></i>${this.st(["fresh", "open", "save"])}
          <svg width="9" height="18" viewBox="0 0 9 18"><path d="M4 0v18" stroke="#555"/><path d="M4 6v6l4-3z" fill="#333"/></svg>
          <i class="sep"></i>${this.st(["hier", "obj", "comp"], ["obj"])}
          <i class="sep"></i><button class="icon thin" aria-label="Mask list">${this.i(STATUS.list, 13)}</button>
          ${this.st(["plus", "joint", "curve", "surf", "lattice", "part", "sphere", "help", "lock", "marquee"], ["plus", "joint", "curve", "surf", "lattice", "part", "sphere", "help"])}
          <i class="sep"></i>${this.st(["mGrid", "mCurve", "mPoint", "mPlane", "mLive"])}
          <i class="sep"></i>${this.st(["inp", "outp", "hist"], ["hist"])}
          <i class="sep"></i>${this.st(["rView", "render", "ipr", "rSet"])}
          <i class="sep"></i>
          <button class="mode" aria-label="Input mode"><svg width="20" height="14" viewBox="0 0 20 14"><path d="M0 5h7L3.500 9z" fill="#222"/><path d="M8.500 1.500h11v11h-11zM8.500 7h11M14 1.500v11" fill="none" stroke="#333"/><circle cx="14" cy="7" r="2" fill="#fff" stroke="#222"/></svg></button>
          ${["X", "Y", "Z"].map((a) => html`<label class="coord">${a}:<input class="field" /></label>`)}
          <span class="grow"></span>
          <button class="icon" aria-label="Attribute editor">${this.i(svg`<path d="M1 9h22M1 14h22M3 18h20M3 22h20M8 14v8M14 14v8M6 8c0-6 11-6 11 0" fill="none" stroke="#555" stroke-width="1.800"/>`)}</button>
          <button class="icon" aria-label="Tool settings">${this.i(svg`<path d="M1 7h9M5 12h17M12 3h4M18 3h4M12 7h11M5 12v4M12 9v6" stroke="#555" stroke-width="1.800"/><circle cx="4" cy="20" r="2.300" fill="none" stroke="#d33" stroke-width="1.400"/><circle cx="12" cy="20" r="2.300" fill="none" stroke="#a35" stroke-width="1.400"/><circle cx="20" cy="20" r="3" fill="#46d"/>`)}</button>
          <button class="icon" aria-label="Channel box">${this.i(svg`<path d="M2 4h7M11 4h12M8 8h15M2 12h20M2 17h6M12 17h10M2 21h6M12 21h10M10 1v9" stroke="#555" stroke-width="1.800"/><path d="M7 14h4v3H7z" fill="#2a8"/><path d="M7 19h4v4H7z" fill="#c33"/>`)}</button>
        </div>

        <div class="row tabs dots" role="tablist">
          ${TABS.map((t) => html`<button role="tab" aria-selected=${t === this.tab} class=${classMap({ active: t === this.tab })} @click=${() => (this.tab = t)}>${t}</button>`)}
          <span class="grow"></span>
          <svg width="17" height="14" viewBox="0 0 17 14"><path d="M3 3h9l-1 10H4z" fill="#444"/><path d="M2 2h11M6 1h3M6 5v6M9 5v6" stroke="#222" stroke-width="1.300"/></svg>
        </div>
        <div class="shelfrow dots">
          <div class="shelfnav">
            <button aria-label="Shelf tabs"><svg width="14" height="8" viewBox="0 0 14 8"><path d="M1 1h10v6H1z" fill="#ddd"/><path d="M11 1v7" stroke="#333" stroke-width="1.500"/></svg></button>
            <button aria-label="Shelf menu"><svg width="10" height="7" viewBox="0 0 10 7"><path d="M0 1h10L5 6z" fill="#000"/></svg></button>
          </div>
          <div class="shelf">
            ${SHELF.map((art, n) => html`<button aria-label="Shelf item ${n + 1}">${this.i(art, 24)}</button>`)}
            <span class="grow"></span>
            <div class="updown">${this.arrow(true)}${this.arrow()}</div>
          </div>
        </div>
        <div class="bottomline"></div>

        <div class="main">
          <div class="toolbox">
            ${TOOLS.map(([n, art]) => html`<button class=${classMap({ picked: n === this.tool })} aria-label=${n} @click=${() => (this.tool = n)}>${this.i(art, n === this.tool ? 22 : 25)}</button>`)}
            <div class="space"></div>
            ${LAYOUTS.map(([n, art]) => html`<button class="layout" aria-label=${n}>${this.i(art, 24)}</button>`)}
            <button class="more" aria-label="More layouts">${this.arrow(false, 6)}</button>
            <button class="brand" aria-label="Maya">${this.i(svg`<path d="M0 10L24 2v22H0z" fill="#6a0c16"/><path d="M7 20C1 11 10 5 16 2c-2 4-6 7-5 10M10 21c-4-6 2-9 6-14-1 5 2 5 2 9s-4 7-8 5c-2-3 0-5 3-7" fill="none" stroke="#efd6d6" stroke-width="1.500"/>`, 26)}</button>
          </div>

          <section class="panel">
            <div class="row panelmenu">${this.menu(["View", "Shading", "Lighting", "Show", "Renderer", "Panels"])}</div>
            <div class="row panelbar">
              ${PANEL_GROUPS.map((g) => html`<i class="sep"></i>${g.map((k) => html`<button class=${P[k][0]} aria-label=${k}>${this.i(P[k][1], 15)}</button>`)}`)}
            </div>
            <div class="view">
              <svg class="scene" viewBox="97 146 932 486" preserveAspectRatio="xMidYMid slice">
                <defs><radialGradient id="gShadow"><stop offset="0" stop-color="#666"/><stop offset="1" stop-color="#666" stop-opacity="0"/></radialGradient></defs>
                <path d=${GRID} fill="none" stroke="#868686" stroke-width=".7"/>
                <path d=${AXES} stroke="#0a0a0a" stroke-width="1.400"/>
                <ellipse cx="988" cy="208" rx="30" ry="15" fill="url(#gShadow)"/>
                <g stroke="#9a9ea2" stroke-width=".7">
                  <path d="M960 172l26-9 26 9-26 12z" fill="#d2d5d8"/>
                  <path d="M960 172l26 12v34l-25-11z" fill="#c9cdd1"/>
                  <path d="M986 184l26-12-1 35-25 11z" fill="#bfc4c9"/>
                </g>
                <g fill="#6f7680" font-family="Liberation Sans, sans-serif" font-size="8" text-anchor="middle">
                  <text transform="matrix(.8 .33 0 1.150 973 198)">FRONT</text>
                  <text transform="matrix(.8 -.33 0 1.150 999 199)">RIGHT</text>
                  <text transform="matrix(.85 .1 -.5 .6 987 174)">TOP</text>
                </g>
                <path d="M117 611v-9" stroke="#3d6" /><path d="M117 611l-7 3" stroke="#22c"/><path d="M117 611l8 3" stroke="#c22"/>
                <g font-family="DejaVu Sans, sans-serif" font-size="11" font-weight="bold"><text x="113" y="599" fill="#1be81b">y</text><text x="105" y="613" fill="#0a0ae0">z</text><text x="122" y="613" fill="#f01010">x</text></g>
                <path d="M558.500 408v14l3.500-3 2.500 5.500 2.500-1-2.500-5.500 4-.5z" fill="#fff" stroke="#333" stroke-width=".8"/>
              </svg>
              <div class="cam">persp</div>
            </div>
          </section>

          <aside class="side">
            <div class="griph"></div>
            <div class="row sidebar">
              <button aria-label="Channels">${this.i(channelIcon(false), 15)}</button>
              <button aria-label="Layers">${this.i(channelIcon(true), 15)}</button>
              <button class="sunk" aria-label="Both">${this.i(channelIcon(false), 15)}</button>
              <span class="grow"></span>
              <button class="raised" aria-label="Manipulator">${this.i(svg`<path d="M10 4h5v9h-5z" fill="#0a9038"/><path d="M11 12l-9 7 8 1z" fill="#1a22c0"/><path d="M13 12l10 3-1 6-8-3z" fill="#c01a1a"/>`, 15)}</button>
              <button class="raised" aria-label="Speed">${this.i(svg`<circle cx="12" cy="12" r="9" fill="#ddd" stroke="#888" stroke-width="2.500"/><path d="M12 3a9 9 0 0 0 0 18c4-4-2-5 0-9s4-5 0-9z" fill="#888"/>`, 15)}</button>
              <button class="raised" aria-label="Hyperbolic">${this.i(svg`<path d="M2 21l9-9-4-2L22 3l-5 15-3-3-9 8z" fill="#888"/>`, 15)}</button>
            </div>
            <div class="row sidemenu">${this.menu(["Channels", "Edit", "Object", "Show"])}</div>
            <div class="channels"></div>
            <div class="radios">
              ${["Display", "Render", "Anim"].map((r, n) => html`<label><input type="radio" name="layer" .checked=${n === 0} />${r}</label>`)}
            </div>
            <div class="row layermenu">${this.menu(["Layers", "Options", "Help"])}</div>
            <div class="row layerbar">
              <button aria-label="Move layer up">${this.i(svg`${layerStack(8)}<path d="M5 22V7M2 9l3-6 3 6z" stroke="#b0141c" stroke-width="2.500" fill="#b0141c"/>`, 18)}</button>
              <button aria-label="Move layer down">${this.i(svg`${layerStack(8)}<path d="M5 2v15M2 15l3 6 3-6z" stroke="#b0141c" stroke-width="2.500" fill="#b0141c"/>`, 18)}</button>
              <button aria-label="New layer">${this.i(svg`${sheet}${sparkle}`, 18)}</button>
              <button aria-label="New layer from selected">${this.i(svg`${sheet}<path d="M4 8h9v9H4z" fill="#2a82d2"/>${sparkle}`, 18)}</button>
            </div>
            <div class="layers"><div class="scroll">${this.arrow(true)}<span class="thumb"></span><span class="down">${this.arrow()}</span></div></div>
            <div class="pager"><button>&lt;&lt;</button><button>&gt;&gt;</button></div>
          </aside>
        </div>

        <div class="row time dots">
          <div class="ticks">
            ${Array.from({ length: 24 }, (_, n) => n === 0 ? html`<div class="tick now"><span>1</span><span>1</span></div>` : html`<div class="tick">${n + 1}</div>`)}
          </div>
          <input class="field num" aria-label="Current time" value="1.00" />
          <div class="play">${PLAYBACK.map(([n, art]) => html`<button aria-label=${n}>${this.i(art, 19)}</button>`)}</div>
        </div>
        <div class="row range dots">
          <input class="field num" aria-label="Animation start" value="1.00" />
          <input class="field num" aria-label="Playback start" value="1.00" />
          <div class="trough"><div class="bar"><button aria-label="Range start"></button><button aria-label="Range end"></button></div></div>
          <input class="field num" aria-label="Playback end" value="24.00" />
          <input class="field num" aria-label="Animation end" value="48.00" />
          <button class="drop" aria-label="Anim layer menu">${this.arrow(false, 14)}</button><div class="set">No Anim Layer</div>
          <button class="drop" aria-label="Character set menu">${this.arrow(false, 14)}</button><div class="set">No Character Set</div>
          <button class="drop" aria-label="Auto key">${this.i(svg`<circle cx="5" cy="12" r="3.500" fill="none" stroke="#222" stroke-width="2.500"/><path d="M9 12h14M18 12v4M22 12v4" stroke="#444" stroke-width="2.500"/>`)}</button>
          <button class="drop" aria-label="Preferences">${this.i(svg`<path d="M3 3h18v18H3z" fill="#eee" stroke="#222" stroke-width="2"/><path d="M3 3h18v4H3z" fill="#58a"/><path d="M6 13h12M8 18l6-9M10 10l6 8" stroke="#c44" stroke-width="1.500"/>`)}</button>
        </div>
        <div class="row cmd dots">
          <label for="mel">MEL</label><input id="mel" class="field" /><output></output>
          <button class="drop" aria-label="Script editor">${this.i(svg`<path d="M3 3h18v18H3z" fill="#eee" stroke="#222" stroke-width="2"/><path d="M3 3h18v4H3z" fill="#47a"/><path d="M6 10h12v8H6zM6 14h12" fill="#ccc" stroke="#222" stroke-width="1.500"/>`)}</button>
        </div>
        <div class="row helpline dots"><p>Select Tool: select an object</p></div>
      </div>`;
  }
}
